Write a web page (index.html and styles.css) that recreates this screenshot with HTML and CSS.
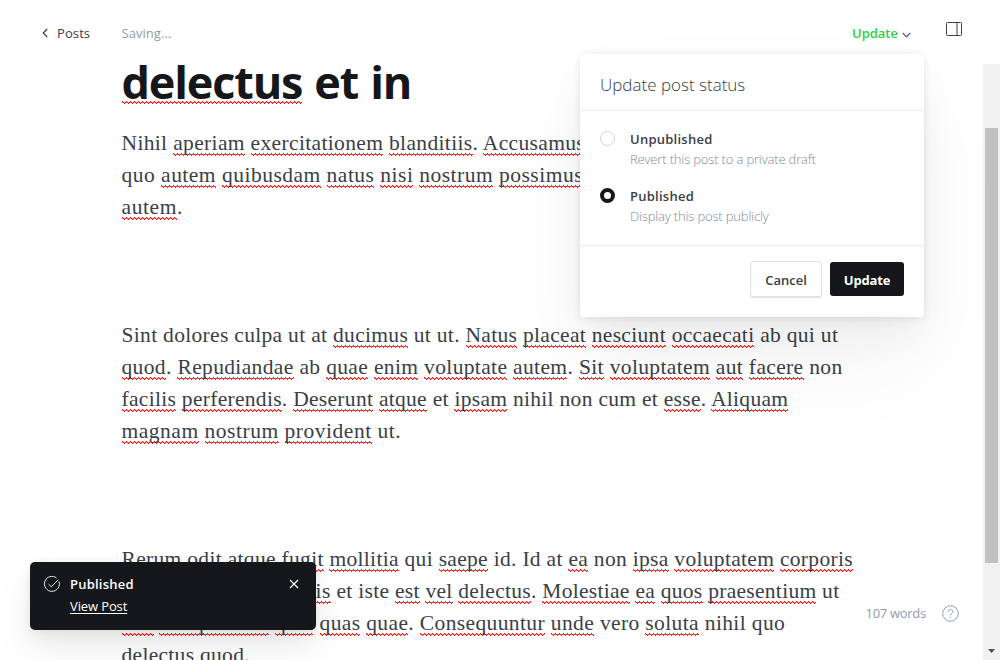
FILE: index.html
```
<!DOCTYPE html>
<html lang="en">
<head>
<meta charset="utf-8">
<title>Editor</title>
<link rel="stylesheet" href="styles.css">
</head>
<body>
<div class="editor">
  <header class="topbar">
    <a class="back"><svg width="6" height="10" viewBox="0 0 6 10"><path d="M5.2 1 1.2 5l4 4"/></svg><span class="back-label">Posts</span></a>
    <span class="saving">Saving...</span>
    <a class="update-trigger"><span class="update-label">Update</span><svg width="9" height="6" viewBox="0 0 9 6"><path d="M.7 1 4.5 4.8 8.3 1"/></svg></a>
    <svg class="sidebar-icon" width="16" height="14" viewBox="0 0 16 14"><rect x=".5" y=".5" width="15" height="13" rx="1"/><path d="M11 .5v13"/></svg>
  </header>
  <div class="body">
    <main class="content">
      <h1 class="title"><u>delectus</u> et in</h1>
      <p class="para">
        <span class="line l1">Nihil <u>aperiam</u> <u>exercitationem</u> <u>blanditiis</u>. <u>Accusamus</u></span>
        <span class="line l2">quo <u>autem</u> <u>quibusdam</u> <u>natus</u> <u>nisi</u> <u>nostrum</u> <u>possimus</u></span>
        <span class="line l3"><u>autem</u>.</span>
      </p>
      <p class="para">
        <span class="line l4">Sint dolores culpa ut at <u>ducimus</u> ut ut. <u>Natus</u> <u>placeat</u> <u>nesciunt</u> <u>occaecati</u> ab qui ut</span>
        <span class="line l5"><u>quod</u>. <u>Repudiandae</u> ab <u>quae</u> <u>enim</u> <u>voluptate</u> <u>autem</u>. <u>Sit</u> <u>voluptatem</u> <u>aut</u> <u>facere</u> non</span>
        <span class="line l6"><u>facilis</u> <u>perferendis</u>. <u>Deserunt</u> <u>atque</u> et <u>ipsam</u> nihil non cum et <u>esse</u>. <u>Aliquam</u></span>
        <span class="line l7"><u>magnam</u> <u>nostrum</u> <u>provident</u> ut.</span>
      </p>
      <p class="para">
        <span class="line l8"><u>Rerum</u> <u>odit</u> <u>atque</u> <u>fugit</u> <u>mollitia</u> qui <u>saepe</u> id. Id at <u>ea</u> non <u>ipsa</u> <u>voluptatem</u> <u>corporis</u></span>
        <span class="line l9"><span class="lead"><u>voluptatem</u> <u>perferendis</u></span>et iste <u>est</u> <u>vel</u> <u>delectus</u>. <u>Molestiae</u> <u>ea</u> <u>quos</u> <u>praesentium</u> ut</span>
        <span class="line l10"><span class="lead"><u>sint</u> <u>voluptatibus</u> <u>quia</u></span><u>quas</u> <u>quae</u>. <u>Consequuntur</u> <u>unde</u> vero <u>soluta</u> nihil quo</span>
        <span class="line l11">delectus quod.</span>
      </p>
    </main>
    <div class="scrollbar"><div class="thumb"></div><svg width="7" height="4" viewBox="0 0 7 4"><path d="M0 0h7L3.5 4z"/></svg></div>
  </div>
</div>

<section class="popover">
  <h2 class="pop-head"><span class="t-head">Update post status</span></h2>
  <div class="pop-body">
    <div class="option"><i class="radio"></i><div><div class="opt-name">Unpublished</div><div class="opt-desc">Revert this post to a private draft</div></div></div>
    <div class="option"><i class="radio on"></i><div><div class="opt-name">Published</div><div class="opt-desc">Display this post publicly</div></div></div>
  </div>
  <footer class="pop-foot"><button class="btn cancel">Cancel</button><button class="btn primary">Update</button></footer>
</section>

<aside class="toast">
  <svg class="check" width="16" height="16" viewBox="0 0 16 16"><path d="M15 5.4A7.5 7.5 0 1 1 12.6 2M4.6 8.2l2.7 2.6 7-7"/></svg>
  <div class="toast-text"><strong class="toast-title">Published</strong><a class="toast-link">View Post</a></div>
  <svg class="close" width="10" height="10" viewBox="0 0 10 10"><path d="m1 1 8 8M9 1 1 9"/></svg>
</aside>

<div class="status">
  <span class="words">107 words</span>
  <svg width="17" height="17" viewBox="0 0 17 17"><circle cx="8.5" cy="8.5" r="7.8"/><path d="M6.2 6.8c0-3 4.7-2.9 4.7-.2 0 1.9-2.4 1.7-2.4 3.9M8.5 11.8v1.1"/></svg>
</div>
</body>
</html>
```
FILE: styles.css
```
* { box-sizing: border-box; }
body { margin: 0; width: 1000px; height: 660px; overflow: hidden; background: #fff; position: relative; font-family: "Open Sans", "Noto Sans", sans-serif; color: #394047; }
svg { fill: none; stroke: #394047; flex: none; }
.editor { height: 660px; display: flex; flex-direction: column; }
.topbar { height: 64px; flex: none; display: flex; align-items: flex-start; padding: 23px 38px 0 42px; font-size: 13px; line-height: 20px; }
.back { display: flex; width: 79.5px; gap: 9px; }
.back svg { margin-top: 5px; stroke-width: 1.2; }
.back-label { font-weight: 500; letter-spacing: .1px; }
.saving { color: #8e9cac; letter-spacing: .05px; }
.update-trigger { margin-left: auto; display: flex; gap: 4px; color: #30cf43; font-weight: 600; }
.update-trigger svg { margin-top: 9px; stroke-width: 1.4; stroke: #626d79; }
.sidebar-icon { margin: -1px 0 0 35px; }
.body { flex: 1; min-height: 0; display: flex; justify-content: space-between; }
.content { padding-left: 121.5px; }
.title { margin: -12px 0 0; height: 75px; font-size: 45px; line-height: 60px; font-weight: 700; color: #15171a; letter-spacing: -1.15px; word-spacing: 1.5px; white-space: nowrap; }
.title u { background-position: left bottom 9px; }
.para { margin: 0 0 96px; font: 21.5px/32px "Liberation Serif", serif; }
.line { display: block; height: 32px; width: max-content; white-space: nowrap; }
.lead { display: inline-block; letter-spacing: .3px; }
.l9 .lead { width: 215px; letter-spacing: .48px; }
.l10 .lead { width: 198px; }
.l1 { letter-spacing: .35px; }
.l2 { letter-spacing: .49px; }
.l3 { letter-spacing: .6px; }
.l4 { letter-spacing: .315px; }
.l5 { letter-spacing: .36px; }
.l6 { letter-spacing: .3px; }
.l7 { letter-spacing: .52px; }
.l8 { letter-spacing: .314px; }
.l9 { letter-spacing: .29px; }
.l10 { letter-spacing: .38px; }
.l11 { letter-spacing: .3px; }
u { padding-bottom: 1px; text-decoration: none; background: url("data:image/svg+xml,%3Csvg xmlns='http://www.w3.org/2000/svg' width='4' height='3' shape-rendering='crispEdges'%3E%3Cpath d='M0 0h1v1H0zM1 1h1v1H1zM2 2h1v1H2zM3 1h1v1H3z' fill='red'/%3E%3Cpath d='M0 1h1v1H0zM2 1h1v1H2z' fill='%23f88'/%3E%3C/svg%3E") repeat-x left bottom; }
.scrollbar { width: 17px; background: #f1f1f1; display: flex; flex-direction: column; align-items: center; padding-top: 64px; }
.thumb { width: 13px; height: 435px; background: #c1c1c1; }
.scrollbar svg { margin-top: 86px; fill: #505050; stroke: none; }
.popover { position: absolute; left: 580px; top: 54px; width: 344px; height: 263px; border-radius: 4px; background: #fff; box-shadow: 0 0 7px rgba(0,0,0,.07), 0 5px 12px rgba(0,0,0,.04), 0 20px 40px rgba(0,0,0,.035), 0 45px 90px rgba(0,0,0,.05); }
.pop-head { margin: 0; height: 57px; padding: 19px 20px 0; border-bottom: 1px solid #ebeef0; font-size: 17px; line-height: 24px; font-weight: 300; }
.pop-body { height: 135px; padding: 18px 20px 0; border-bottom: 1px solid #ebeef0; }
.option { display: flex; gap: 15px; height: 57px; }
.radio { width: 15px; height: 15px; margin-top: 2px; border: 1px solid #ced4d9; border-radius: 50%; }
.radio.on { border: 4px solid #15171a; }
.opt-name { font-size: 13px; line-height: 20px; font-weight: 600; letter-spacing: .25px; white-space: nowrap; width: max-content; }
.opt-desc { font-size: 13px; line-height: 20px; font-weight: 300; letter-spacing: -.16px; color: #7c8b9a; white-space: nowrap; width: max-content; }
.pop-foot { display: flex; justify-content: flex-end; align-items: flex-start; gap: 8px; padding: 15px 20px; }
.btn { font: 600 13px/34px "Open Sans", sans-serif; padding: 1px 0 0; border-radius: 3px; text-align: center; }
.cancel { width: 72px; height: 36px; padding-top: 2px; line-height: 32px; background: #fff; border: 1px solid #dde1e5; color: #394047; box-shadow: 0 1px 1px #dde1e5; }
.primary { width: 74px; height: 34px; margin-top: 1px; background: #15171a; border: 0; color: #fff; font-weight: 700; letter-spacing: -.15px; }
.toast { position: absolute; left: 30px; top: 562px; width: 286px; height: 68px; padding: 12px 17px 0 14px; display: flex; border-radius: 5px; background: #15171a; color: #fff; font-size: 13px; line-height: 20px; box-shadow: 0 0 6px rgba(0,0,0,.06), 0 8px 16px rgba(0,0,0,.05), 0 20px 40px rgba(0,0,0,.07); }
.toast svg { stroke: #fff; }
.check { margin-top: 2px; opacity: .9; }
.toast-text { flex: 1; padding-left: 10px; display: flex; flex-direction: column; align-items: flex-start; gap: 3px; }
.toast-title { font-weight: 600; letter-spacing: .22px; }
.toast-link { line-height: 19px; letter-spacing: -.12px; text-decoration: underline; text-underline-offset: 2px; }
.close { margin-top: 5px; stroke-width: 1.2; }
.status { position: absolute; left: 865.5px; top: 603px; display: flex; width: 93px; justify-content: space-between; font-size: 13px; line-height: 20px; color: #8e9cac; letter-spacing: -.3px; }
.status svg { stroke: #8e9cac; margin-top: 2px; }
```
